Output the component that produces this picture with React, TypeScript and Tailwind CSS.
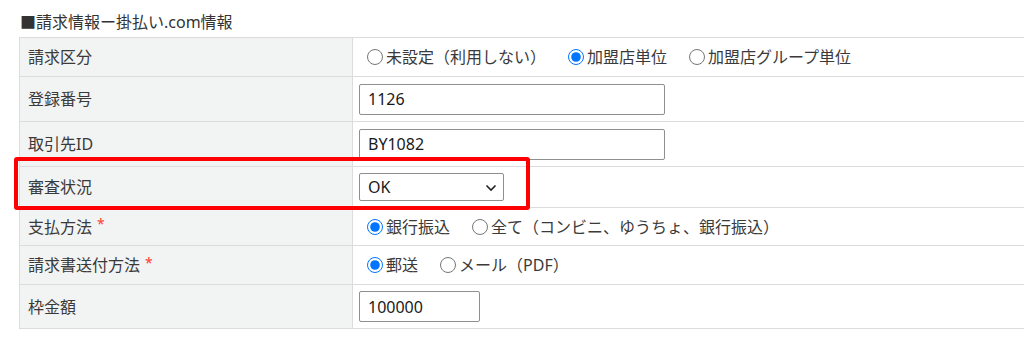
import React from "react";

const font = "font-['Noto_Sans','Noto_Sans_CJK_JP',sans-serif]";

const Label = ({ text, required }: { text: string; required?: boolean }) => (
  <div className="w-[333px] shrink-0 border-r border-[#dcdcdc] bg-[#f2f3f3] pl-[8px] flex items-center text-[16px] text-[#3a3a3a]">
    {text}
    {required ? (
      <span className="ml-[5px] -mt-[6px] text-[#ff3b30] text-[14px]">*</span>
    ) : null}
  </div>
);

const Radio = ({
  label,
  checked,
  name,
  gap,
}: {
  label: string;
  checked?: boolean;
  name: string;
  gap: string;
}) => (
  <label className={`flex items-center ${gap}`}>
    <input
      type="radio"
      name={name}
      defaultChecked={checked}
      className="m-0 ml-[8px] mr-[3px] w-[16px] h-[16px] accent-[#0075ff]"
    />
    <span className="text-[16px] text-[#3a3a3a]">{label}</span>
  </label>
);

const TextBox = ({ value, width }: { value: string; width: string }) => (
  <input
    type="text"
    defaultValue={value}
    className={`${width} h-[31px] border border-[#8f8f8f] rounded-[2px] px-[8px] text-[16px] text-[#1a1a1a] outline-none`}
  />
);

export default function App() {
  return (
    <div className={`${font} bg-white w-full h-[347px] overflow-hidden relative`}>
      <div className="h-[37px] pl-[20px] pt-[11px] text-[16px] leading-[22px] text-[#333]">
        ■請求情報ー掛払い.com情報
      </div>
      <div className="ml-[19px] w-[1020px] border-t border-l border-[#dcdcdc]">
        <div className="flex h-[39px] border-b border-[#dcdcdc]">
          <Label text="請求区分" />
          <div className="flex items-center pl-[6px]">
            <Radio name="kubun" label="未設定（利用しない）" gap="mr-[14px]" />
            <Radio name="kubun" label="加盟店単位" checked gap="mr-[14px]" />
            <Radio name="kubun" label="加盟店グループ単位" gap="" />
          </div>
        </div>
        <div className="flex h-[45px] border-b border-[#dcdcdc]">
          <Label text="登録番号" />
          <div className="flex items-center pl-[6px]">
            <TextBox value="1126" width="w-[306px]" />
          </div>
        </div>
        <div className="flex h-[45px] border-b border-[#dcdcdc]">
          <Label text="取引先ID" />
          <div className="flex items-center pl-[6px]">
            <TextBox value="BY1082" width="w-[306px]" />
          </div>
        </div>
        <div className="flex h-[41px] border-b border-[#dcdcdc]">
          <Label text="審査状況" />
          <div className="flex items-center pl-[6px]">
            <div className="relative w-[145px] h-[28px] border border-[#8f8f8f] rounded-[2px] flex items-center pl-[8px] text-[16px] text-[#1a1a1a]">
              OK
              <svg
                className="absolute right-[6px] top-[9px]"
                width="12"
                height="9"
                viewBox="0 0 12 9"
                fill="none"
              >
                <path d="M1.5 2.5 L6 7 L10.5 2.5" stroke="#222" strokeWidth="1.6" />
              </svg>
            </div>
          </div>
        </div>
        <div className="flex h-[38px] border-b border-[#dcdcdc]">
          <Label text="支払方法" required />
          <div className="flex items-center pl-[6px]">
            <Radio name="shiharai" label="銀行振込" checked gap="mr-[14px]" />
            <Radio name="shiharai" label="全て（コンビニ、ゆうちょ、銀行振込）" gap="" />
          </div>
        </div>
        <div className="flex h-[39px] border-b border-[#dcdcdc]">
          <Label text="請求書送付方法" required />
          <div className="flex items-center pl-[6px]">
            <Radio name="soufu" label="郵送" checked gap="mr-[14px]" />
            <Radio name="soufu" label="メール（PDF）" gap="" />
          </div>
        </div>
        <div className="flex h-[44px] border-b border-[#dcdcdc]">
          <Label text="枠金額" />
          <div className="flex items-center pl-[6px]">
            <TextBox value="100000" width="w-[121px] h-[30px]" />
          </div>
        </div>
      </div>
      <div className="absolute left-[14px] top-[157px] w-[516px] h-[53px] border-[4px] border-[#ff0000] rounded-[3px] pointer-events-none" />
    </div>
  );
}
